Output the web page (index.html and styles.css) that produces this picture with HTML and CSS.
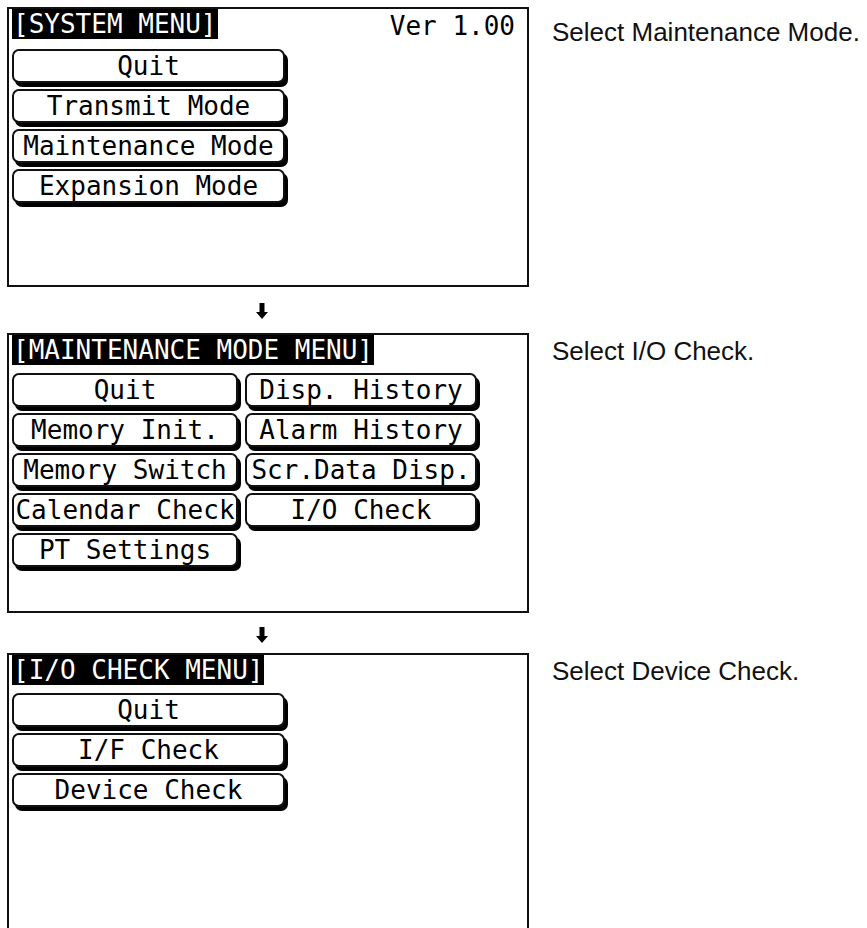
FILE: index.html
```html
<!DOCTYPE html>
<html lang="en">
<head>
    <meta charset="UTF-8">
    <title>Maintenance Mode - I/O Check</title>
    <link rel="stylesheet" href="styles.css">
</head>
<body>
    <div class="page">

        <!-- Step 1: system menu -->
        <div class="step">
            <div class="screen">
                <div class="screen-head">
                    <span class="title">[SYSTEM MENU]</span>
                    <span class="version">Ver 1.00</span>
                </div>
                <div class="buttons buttons-wide">
                    <div class="btn">Quit</div>
                    <div class="btn">Transmit Mode</div>
                    <div class="btn">Maintenance Mode</div>
                    <div class="btn">Expansion Mode</div>
                </div>
            </div>
            <p class="caption caption-first">Select Maintenance Mode.</p>
        </div>

        <div class="arrow arrow-first">
            <svg width="12" height="16" viewBox="0 0 12 16"><path d="M3.5 0h5v9h3.5l-6 7-6-7h3.5z" fill="#000"/></svg>
        </div>

        <!-- Step 2: maintenance mode menu -->
        <div class="step">
            <div class="screen">
                <div class="screen-head">
                    <span class="title">[MAINTENANCE MODE MENU]</span>
                </div>
                <div class="buttons buttons-grid">
                    <div class="btn">Quit</div>
                    <div class="btn">Disp. History</div>
                    <div class="btn">Memory Init.</div>
                    <div class="btn">Alarm History</div>
                    <div class="btn">Memory Switch</div>
                    <div class="btn">Scr.Data Disp.</div>
                    <div class="btn">Calendar Check</div>
                    <div class="btn">I/O Check</div>
                    <div class="btn">PT Settings</div>
                </div>
            </div>
            <p class="caption">Select I/O Check.</p>
        </div>

        <div class="arrow arrow-second">
            <svg width="12" height="16" viewBox="0 0 12 16"><path d="M3.5 0h5v9h3.5l-6 7-6-7h3.5z" fill="#000"/></svg>
        </div>

        <!-- Step 3: I/O check menu -->
        <div class="step">
            <div class="screen">
                <div class="screen-head">
                    <span class="title">[I/O CHECK MENU]</span>
                </div>
                <div class="buttons buttons-wide">
                    <div class="btn">Quit</div>
                    <div class="btn">I/F Check</div>
                    <div class="btn">Device Check</div>
                </div>
            </div>
            <p class="caption">Select Device Check.</p>
        </div>

    </div>
</body>
</html>
```

FILE: styles.css
```css
/* Base Reset */
* {
    margin: 0;
    padding: 0;
    box-sizing: border-box;
}

body {
    background: #fff;
    color: #000;
    font-family: 'Liberation Sans', Arial, sans-serif;
    overflow: hidden;
}

.page {
    padding: 7px 0 0 7px;
}

.step {
    display: flex;
    align-items: flex-start;
}

/* PT screen */
.screen {
    width: 522px;
    height: 280px;
    flex-shrink: 0;
    border: 2px solid #111;
    padding: 0 3px;
    font-family: 'DejaVu Sans Mono', 'Liberation Mono', monospace;
    font-size: 26px;
    line-height: 30px;
}

.screen-head {
    display: flex;
    justify-content: space-between;
    align-items: flex-start;
    margin-bottom: 8px;
}

.title {
    background: #000;
    color: #fff;
    padding: 0 1px;
    white-space: pre;
}

.version {
    padding: 2px 9px 0 0;
}

.buttons-wide {
    width: 277px;
}

.buttons-grid {
    display: grid;
    grid-template-columns: 230px 236px;
    column-gap: 3px;
}

.btn {
    height: 34px;
    margin: 0 4px 6px 0;
    border: 2px solid #111;
    border-radius: 7px;
    box-shadow: 3px 4px 0 #000;
    background: #fff;
    text-align: center;
    line-height: 30px;
    white-space: pre;
    overflow: hidden;
}

/* Right side instructions */
.caption {
    margin: 3px 0 0 23px;
    font-size: 26px;
    line-height: 30px;
    color: #111;
}

.caption-first {
    margin-top: 10px;
}

/* Arrows between screens */
.arrow {
    margin-left: 249px;
    height: 16px;
}

.arrow svg {
    display: block;
}

.arrow-first {
    margin-top: 16px;
    margin-bottom: 14px;
}

.arrow-second {
    margin-top: 14px;
    margin-bottom: 10px;
}
```
